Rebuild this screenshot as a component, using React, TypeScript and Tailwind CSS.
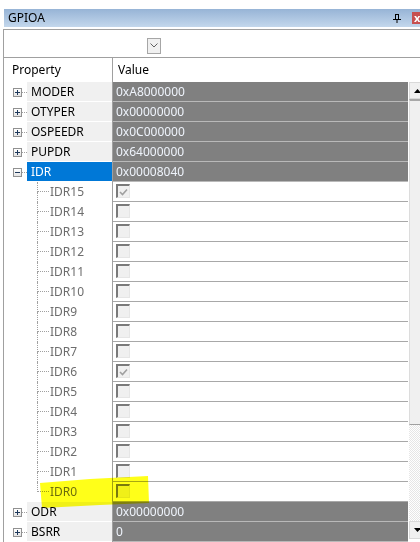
const registers = [
  { name: "MODER", value: "0xA8000000" },
  { name: "OTYPER", value: "0x00000000" },
  { name: "OSPEEDR", value: "0x0C000000" },
  { name: "PUPDR", value: "0x64000000" },
];

const idrBits = [15, 14, 13, 12, 11, 10, 9, 8, 7, 6, 5, 4, 3, 2, 1, 0];
const checkedBits = [15, 6];

function Expander({ open }: { open?: boolean }) {
  return (
    <div className="w-[9px] h-[9px] border border-[#919191] bg-gradient-to-b from-white to-[#e4e4e4] flex items-center justify-center shrink-0">
      <svg width="7" height="7" viewBox="0 0 7 7">
        <path d="M1 3.5h5" stroke="#1e395b" strokeWidth="1" />
        {!open && <path d="M3.5 1v5" stroke="#1e395b" strokeWidth="1" />}
      </svg>
    </div>
  );
}

function TopRow({ name, value, selected, open }: { name: string; value: string; selected?: boolean; open?: boolean }) {
  return (
    <div className="flex h-[20px]">
      <div className="w-[108px] flex shrink-0">
        <div className="w-[23px] flex items-center pl-[9px] shrink-0">
          <Expander open={open} />
          <div className="flex-1 border-t border-dotted border-[#a0a0a0]" />
        </div>
        <div
          className={
            selected
              ? "flex-1 h-[19px] bg-[#0078d7] text-white pl-[4px] leading-[19px]"
              : "flex-1 h-[19px] bg-[#f0f0f0] text-black pl-[4px] leading-[19px]"
          }
        >
          {name}
        </div>
      </div>
      <div className="w-px bg-[#a0a0a0] shrink-0" />
      <div className="w-[295px] shrink-0 border-b border-[#b9b9b9] bg-[#808080] text-[#eef3fb] pl-[3px] leading-[19px]">
        {value}
      </div>
    </div>
  );
}

function Checkbox({ checked }: { checked: boolean }) {
  return (
    <div className="w-[14px] h-[14px] border-t-2 border-l-2 border-t-[#7a7a7a] border-l-[#7a7a7a] border-b border-r border-b-[#e6e6e6] border-r-[#e6e6e6] bg-[#f0f0f0] flex items-center justify-center">
      {checked && (
        <svg width="9" height="8" viewBox="0 0 9 8">
          <path d="M1 4l2.5 2.5L8 1.5" stroke="#a0a0a0" strokeWidth="1.6" fill="none" />
        </svg>
      )}
    </div>
  );
}

function BitRow({ bit, last }: { bit: number; last: boolean }) {
  return (
    <div className="flex h-[20px]">
      <div className="w-[108px] flex shrink-0">
        <div className="w-[33px] shrink-0" />
        <div className="w-[12px] flex flex-col shrink-0">
          <div className="h-[10px] border-l border-b border-dotted border-[#a0a0a0]" />
          <div className={last ? "h-[10px]" : "h-[10px] border-l border-dotted border-[#a0a0a0]"} />
        </div>
        <div className="flex-1 pl-[1px] leading-[19px] text-[#6d6d6d]">IDR{bit}</div>
      </div>
      <div className="w-px bg-[#a0a0a0] shrink-0" />
      <div className="w-[295px] shrink-0 border-b border-[#a8a8a8] bg-white pl-[3px] pt-[2px]">
        <Checkbox checked={checkedBits.includes(bit)} />
      </div>
    </div>
  );
}

export default function App() {
  return (
    <div className="w-[420px] h-[542px] overflow-hidden bg-white relative text-[12px] text-black" style={{ fontFamily: '"Noto Sans", "Liberation Sans", sans-serif' }}>
      <div className="h-[9px]" />
      <div className="ml-[4px] h-[18px] bg-gradient-to-b from-[#97b4d6] to-[#c3d7ec] flex items-center pl-[4px]">
        <span className="flex-1">GPIOA</span>
        <svg width="8" height="9" viewBox="0 0 8 9" className="mr-[11px]">
          <path d="M2 0.5h4M2.5 0.5v4.5M5.5 0.5v4.5M0 5.5h8M4 5.5v3.5" stroke="#000" strokeWidth="1" fill="none" />
        </svg>
        <div className="w-[12px] h-[12px] bg-[#c75050] text-white text-[11px] leading-[11px] font-bold pl-[2px] mr-[-4px]">x</div>
      </div>
      <div className="ml-[3px] mt-[2px] border-l border-t border-[#a0a0a0] flex">
        <div className="flex-1 flex flex-col">
          <div className="h-[28px] border-b border-[#a0a0a0] flex items-center pl-[143px] pt-[4px]">
            <div className="w-[14px] h-[16px] border border-[#a6a6a6] bg-[#f0f0f0] flex items-center justify-center">
              <svg width="8" height="5" viewBox="0 0 8 5">
                <path d="M0.5 0.5l3.5 3.5 3.5-3.5" stroke="#606060" strokeWidth="1" fill="none" />
              </svg>
            </div>
          </div>
          <div className="flex h-[24px]">
            <div className="w-[108px] pl-[8px] leading-[24px] shrink-0">Property</div>
            <div className="w-px bg-[#a0a0a0] shrink-0" />
            <div className="pl-[5px] leading-[24px]">Value</div>
          </div>
          <div className="flex">
            <div className="flex flex-col">
              {registers.map((r) => (
                <TopRow key={r.name} name={r.name} value={r.value} />
              ))}
              <TopRow name="IDR" value="0x00008040" selected open />
              {idrBits.map((b) => (
                <BitRow key={b} bit={b} last={b === 0} />
              ))}
              <TopRow name="ODR" value="0x00000000" />
              <TopRow name="BSRR" value="0" />
            </div>
            <div className="w-[17px] shrink-0 flex flex-col ml-px">
              <div className="h-[17px] border border-[#d9d9d9] bg-[#f0f0f0] flex items-center justify-center">
                <svg width="7" height="4" viewBox="0 0 7 4">
                  <path d="M0 4h7L3.5 0z" fill="#000" />
                </svg>
              </div>
              <div className="h-[326px] border-t-2 border-[#a8a8a8] border-x border-x-[#dcdcdc] border-b border-b-[#a0a0a0] bg-[#f0f0f0]" />
              <div className="h-[96px] bg-[repeating-conic-gradient(#ffffff_0%_25%,#e6e6e6_0%_50%)] bg-[length:2px_2px]" />
              <div className="h-[18px] border border-[#d9d9d9] bg-[#f0f0f0] flex items-center justify-center">
                <svg width="7" height="4" viewBox="0 0 7 4">
                  <path d="M0 0h7L3.5 4z" fill="#000" />
                </svg>
              </div>
            </div>
          </div>
        </div>
      </div>
      <svg className="absolute left-0 top-0 pointer-events-none mix-blend-multiply" width="420" height="542">
        <path d="M40 483 L90 479 L148 476 L149 503 L100 505 L42 508 Z" fill="#ffff00" opacity="0.9" />
      </svg>
    </div>
  );
}
